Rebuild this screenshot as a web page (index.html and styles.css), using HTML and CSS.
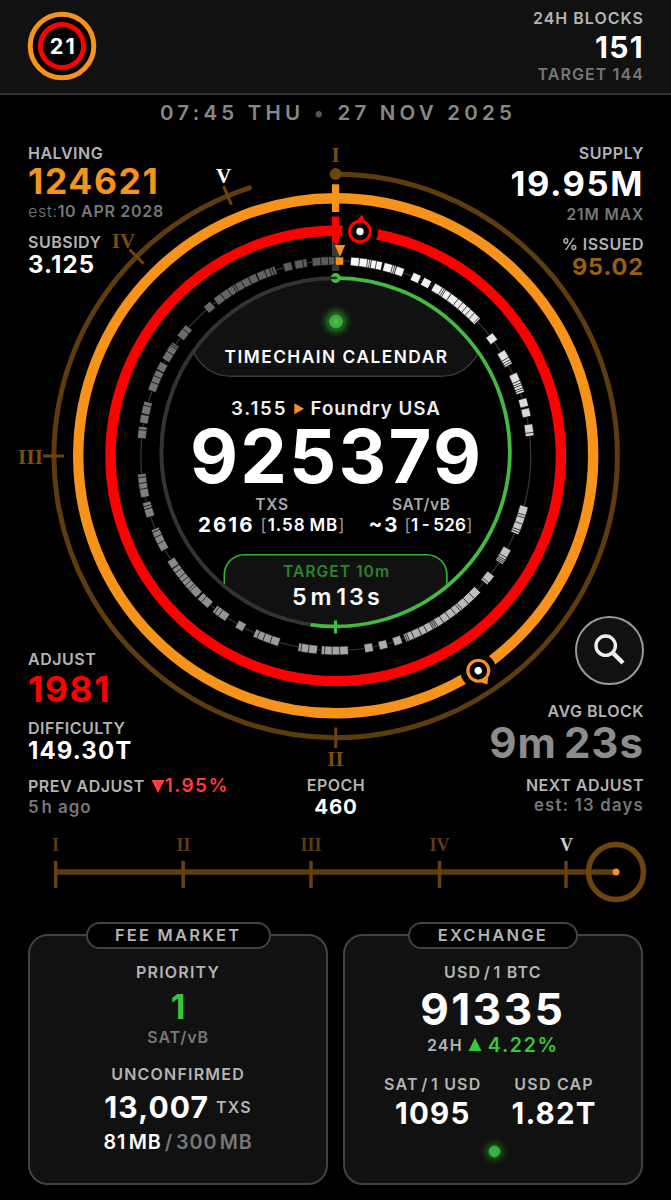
FILE: index.html
```html
<!DOCTYPE html>
<html lang="en">
<head>
    <meta charset="UTF-8">
    <meta name="viewport" content="width=device-width, initial-scale=1.0">
    <title>Timechain Calendar</title>
    <link rel="stylesheet" href="styles.css">
</head>
<body>

    <!-- Header -->
    <header class="header">
        <svg class="logo" width="70" height="70" viewBox="0 0 70 70">
            <circle cx="35" cy="35" r="31.8" fill="#000" stroke="#f7931a" stroke-width="5"/>
            <circle cx="35" cy="35" r="21.6" fill="#000" stroke="#f00" stroke-width="5"/>
            <text class="logo-text" x="22.8" y="42.8" textLength="25">21</text>
        </svg>
        <div class="col right">
            <div class="label blocks-label">24H BLOCKS</div>
            <div class="blocks">151</div>
            <div class="sub target">TARGET 144</div>
        </div>
    </header>

    <main>
        <div class="date">07:45 THU <span class="dot">•</span> 27 NOV 2025</div>

        <section class="clock">
            <svg class="dial" width="671" height="689" viewBox="0 136 671 689">
                <defs>
                    <clipPath id="inner"><circle cx="335.7" cy="452.2" r="175"/></clipPath>
                    <radialGradient id="led">
                        <stop offset="0" stop-color="#4cc44c"/>
                        <stop offset="1" stop-color="#2f9c33"/>
                    </radialGradient>
                    <radialGradient id="glow">
                        <stop offset="0.45" stop-color="#2fbf2f" stop-opacity="0.6"/>
                        <stop offset="0.7" stop-color="#2fbf2f" stop-opacity="0.2"/>
                        <stop offset="1" stop-color="#2fbf2f" stop-opacity="0"/>
                    </radialGradient>
                </defs>

                <!-- Epoch ring -->
                <path d="M335.7 174.3A281.7 281.7 0 0 1 335.7 737.7A281.7 281.7 0 0 1 249.5 187.8" fill="none" stroke="#5f3c0e" stroke-width="5" stroke-linecap="round"/>
                <circle cx="335.7" cy="174" r="6" fill="#6d430e"/>
                <g class="ring-ticks">
                    <path d="M223.6 186.2L231.4 204.6M129.5 249.5L143.7 263.7M43 456H64M335.7 727.5V748"/>
                </g>
                <g class="roman">
                    <text x="335.5" y="162">I</text>
                    <text x="335.5" y="766">II</text>
                    <text x="30.5" y="464" textLength="25">III</text>
                    <text x="123.5" y="248">IV</text>
                    <text class="on" x="223.5" y="182.5">V</text>
                </g>

                <!-- Halving and difficulty rings -->
                <circle cx="335.7" cy="455.7" r="257.5" fill="none" stroke="#f7931a" stroke-width="10.4"/>
                <circle cx="335.7" cy="455.9" r="225.2" fill="none" stroke="#f00" stroke-width="10.4"/>
                <circle cx="360" cy="231.5" r="18" fill="#000"/>
                <circle cx="478.3" cy="670.7" r="18" fill="#000"/>
                <rect x="332" y="184.3" width="7.2" height="27.7" fill="#f7931a"/>
                <path d="M332 216.5h7.2v9.3h2.4v10h-2.4v6l-2 4-5.2-5z" fill="#f00"/>
                <g transform="translate(360 231.5) rotate(6.1)">
                    <path d="M-4 -11L0 -17L4 -11z" fill="#f00"/>
                    <circle r="10.4" fill="#000" stroke="#f00" stroke-width="3.2"/>
                    <circle r="3.7" fill="#fff"/>
                </g>
                <g transform="translate(478.3 670.7) rotate(146.5)">
                    <path d="M-4.5 -11L0 -16.5L4.5 -11z" fill="#f7931a"/>
                    <circle r="10.4" fill="#000" stroke="#f7931a" stroke-width="3.2"/>
                    <circle r="3.7" fill="#fff"/>
                </g>

                <!-- Blocks of the last 24 hours -->
                <circle cx="335.8" cy="455.7" r="195" fill="none" stroke="#333" stroke-width="1.3"/>
                <path d="M332 240.5l7.2 6.5v24h-7.2z" fill="#3a3a3a"/>
                <g id="blocks"></g>
                <path d="M334.8 245h10.4l-5.2 12z" fill="#f7931a"/>
                <rect x="335.7" y="257.4" width="7.6" height="7.4" fill="#f7931a"/>

                <!-- Inner face -->
                <circle cx="335.7" cy="452.2" r="176" fill="#000"/>
                <g clip-path="url(#inner)">
                    <rect x="190.5" y="230" width="291" height="146.3" rx="40" fill="#111" stroke="#3a3a3a" stroke-width="1.4"/>
                    <rect x="224.3" y="554.7" width="222.6" height="120" rx="20" fill="#111"/>
                    <path d="M224.3 592V574.7a20 20 0 0 1 20-20H426.9a20 20 0 0 1 20 20V589" fill="none" stroke="#34b334" stroke-width="1.6"/>
                </g>
                <circle cx="335.7" cy="452.2" r="174.3" fill="none" stroke="#333" stroke-width="4"/>
                <circle cx="335.7" cy="278" r="5" fill="#3fc13f"/>
                <path d="M335.7 277.9A174.3 174.3 0 1 1 310.5 624.7" fill="none" stroke="#40bd3c" stroke-width="3.5"/>
                <path d="M330 278h6" stroke="#2b2b2b" stroke-width="2.6" stroke-linecap="round"/>
                <path d="M335.5 620.5V633.5" stroke="#3fc13f" stroke-width="3.2"/>

                <circle cx="336" cy="321.5" r="16" fill="url(#glow)"/>
                <circle cx="336" cy="321.5" r="7.8" fill="url(#led)" stroke="#14541a" stroke-width="1.2"/>

                <g class="face">
                    <text x="224.5" y="363.3" class="title" textLength="222.5">TIMECHAIN CALENDAR</text>
                    <text x="231" y="415" class="miner" textLength="54.5">3.155</text>
                    <path d="M294.3 403.3L304 408.7L294.3 414.2z" fill="#f7931a"/>
                    <text x="310.5" y="415" class="miner" textLength="129.5">Foundry USA</text>
                    <text x="190" y="483" class="height" textLength="291">925379</text>
                    <text x="255.2" y="510" class="face-label" textLength="33">TXS</text>
                    <text x="392" y="510" class="face-label" textLength="58">SAT/vB</text>
                    <text x="198" y="532.2" class="face-value" textLength="54.5">2616</text>
                    <text x="260.5" y="530.5" class="range" textLength="84"><tspan class="br">[</tspan>1.58&#8201;MB<tspan class="br">]</tspan></text>
                    <text x="368.5" y="532.2" class="face-value" textLength="29">~3</text>
                    <text x="404.5" y="530.5" class="range" textLength="68"><tspan class="br">[</tspan>1&#8201;-&#8201;526<tspan class="br">]</tspan></text>
                    <text x="283" y="577.3" class="face-target" textLength="106">TARGET 10m</text>
                    <text x="292" y="604.7" class="elapsed" textLength="39.5">5m</text>
                    <text x="336.2" y="604.7" class="elapsed" textLength="43.5">13s</text>
                </g>
            </svg>

            <div class="corners">
                <div class="row top">
                    <div class="col">
                        <div class="label">HALVING</div>
                        <div class="big orange">124621</div>
                        <div class="sub est"><span class="light">est:</span>10 APR 2028</div>
                        <div class="label second">SUBSIDY</div>
                        <div class="mid">3.125</div>
                    </div>
                    <div class="col right">
                        <div class="label">SUPPLY</div>
                        <div class="big supply">19.95M</div>
                        <div class="sub max">21M MAX</div>
                        <div class="label issued">% ISSUED</div>
                        <div class="mid brown">95.02</div>
                    </div>
                </div>

                <div class="row bottom">
                    <div class="col adjust">
                        <div class="label">ADJUST</div>
                        <div class="big red">1981</div>
                        <div class="label difficulty">DIFFICULTY</div>
                        <div class="mid">149.30T</div>
                        <div class="label prev">PREV ADJUST
                            <svg width="14" height="13" viewBox="0 0 14 13"><path d="M0.5 0H13.5L7 13z" fill="#ff3b3b"/></svg><span class="change">1.95%</span>
                        </div>
                        <div class="sub ago">5<span class="unit">h</span> ago</div>
                    </div>
                    <div class="col center">
                        <div class="label">EPOCH</div>
                        <div class="epoch">460</div>
                    </div>
                    <div class="col right average">
                        <button class="search" aria-label="Search">
                            <svg width="34" height="34" viewBox="0 0 34 34" fill="none" stroke="#eee">
                                <circle cx="12.7" cy="12.7" r="9.7" stroke-width="3.4"/>
                                <path d="M20.5 20.5L30 30" stroke-width="4.4"/>
                            </svg>
                        </button>
                        <div class="label avg-label">AVG BLOCK</div>
                        <div class="avg">9m<span class="thin"></span>23s</div>
                        <div class="label next">NEXT ADJUST</div>
                        <div class="sub days">est: 13 days</div>
                    </div>
                </div>
            </div>
        </section>

        <!-- Epoch timeline -->
        <svg class="timeline" width="671" height="90" viewBox="0 825 671 90">
            <path d="M54.5 872H616" stroke="#5f3c0e" stroke-width="5.5"/>
            <path d="M55.7 861V888M183.2 861V888M311 861V888M439.5 861V888M566 861V888" stroke="#6a400f" stroke-width="3.5"/>
            <circle cx="616" cy="872" r="27.5" fill="none" stroke="#6d430e" stroke-width="5.6"/>
            <circle cx="616" cy="872" r="3.5" fill="#f7931a"/>
            <g class="roman small">
                <text x="55.5" y="850.5">I</text>
                <text x="183.5" y="850.5">II</text>
                <text x="311" y="850.5">III</text>
                <text x="439.5" y="850.5">IV</text>
                <text class="soft" x="566.5" y="850.5">V</text>
            </g>
        </svg>

        <section class="cards">
            <div class="card">
                <div class="pill fee">FEE MARKET</div>
                <div class="label priority">PRIORITY</div>
                <div class="fee-value">1</div>
                <div class="sub satvb">SAT/vB</div>
                <div class="label unconfirmed">UNCONFIRMED</div>
                <div class="txs"><span class="txs-value">13,007</span><span class="label">TXS</span></div>
                <div class="mempool">81<i></i>MB<span class="dim"><b>/</b>300<i></i>MB</span></div>
            </div>
            <div class="card">
                <div class="pill exchange">EXCHANGE</div>
                <div class="label pair">USD<i></i>/<i></i>1 BTC</div>
                <div class="price">91335</div>
                <div class="day">
                    <span class="label">24H</span>
                    <svg width="14" height="13" viewBox="0 0 14 13"><path d="M7 0L13.5 13H0.5z" fill="#36c936"/></svg>
                    <span class="gain">4.22%</span>
                </div>
                <div class="pairs">
                    <div>
                        <div class="label">SAT<i></i>/<i></i>1 USD</div>
                        <div class="amount">1095</div>
                    </div>
                    <div>
                        <div class="label">USD CAP</div>
                        <div class="amount">1.82T</div>
                    </div>
                </div>
                <div class="led"></div>
            </div>
        </section>
    </main>

    <script>
        // clock angle of every block, newest first
        const angles = [
            5.6, 8, 8.6, 9.1, 10.6, 12.4, 15.4, 16, 16.5, 19,
            24.2, 27.6, 31.2, 31.8, 32.3, 34.2, 36.7, 38.4, 40, 41.4, 42.9, 44.8, 45.3,
            53.1, 59.1, 59.9, 60.6, 61.2, 66.5, 67.3, 67.9, 68.8, 69.4, 70.1, 74.3, 77.3, 82, 83,
            106.2, 107, 108.9, 110.8, 111.5, 112.2, 119.6, 120.4, 120.9, 121.4, 121.9, 128.5, 129.2,
            134.6, 136.9, 139.3, 140, 141.7, 143.8, 145.9, 147.9, 148.4, 148.9, 149.4, 151.4, 153.2, 155.5, 157, 157.6, 158.1,
            161.6, 166, 170.3, 177.6, 179.8, 182, 183,
            186.7, 188.9, 189.8, 198.1, 200.3, 202.1, 203.4, 209.2,
            215, 216.3, 217.1, 221.3, 222.8, 225.8, 226.6, 228, 229.4, 230.8, 232.6, 234, 236.6,
            242.4, 244.4, 246, 246.8, 253, 253.9, 255, 259, 260.7, 262.4, 263.4,
            276.3, 277.3, 280.8, 283.5, 284.7, 290.6, 292.5, 294.3, 297,
            300.5, 302.4, 303, 303.6, 308.4, 309.9, 319.6,
            323.3, 325.7, 327.5, 328.2, 330.3, 332.6, 335, 337.7, 339.2, 340, 340.9,
            345.8, 349.1, 350.3, 354.3, 356.6, 358.5
        ];
        const group = document.getElementById("blocks");

        angles.slice().reverse().forEach(angle => {
            const shade = Math.round(angle < 250 ? 255 - angle * 0.5 : 130 - (angle - 250) * 0.38);
            const block = document.createElementNS("http://www.w3.org/2000/svg", "rect");
            block.setAttribute("x", 331.5);
            block.setAttribute("y", 256.5);
            block.setAttribute("width", 8.6);
            block.setAttribute("height", 8.6);
            block.setAttribute("fill", `rgb(${shade}, ${shade}, ${shade})`);
            block.setAttribute("stroke", "#000");
            block.setAttribute("stroke-width", 0.65);
            block.setAttribute("transform", `rotate(${angle} 335.8 455.7)`);
            group.appendChild(block);
        });
    </script>

</body>
</html>
```

FILE: styles.css
```css
/* Page */
body {
    margin: 0;
    background-color: #000;
    color: #fff;
    font-family: "Inter", "Liberation Sans", sans-serif;
    font-weight: 600;
}

main {
    display: flex;
    flex-direction: column;
}

svg {
    display: block;
    flex: none;
}

i {
    display: inline-block;
    width: 2.5px;
}

.header {
    display: flex;
    justify-content: space-between;
    height: 93px;
    padding: 0 27px;
    background-color: #111;
    border-bottom: 2px solid #333;
}

.logo {
    margin-top: 11px;
}

.logo-text {
    font-size: 21.5px;
    font-weight: 700;
    fill: #fff;
}

.date {
    height: 41px;
    padding-left: 5px;
    line-height: 36px;
    font-size: 20.5px;
    letter-spacing: 4.2px;
    color: #888;
    text-align: center;
}

.dot {
    color: #555;
}

/* Text blocks */
.col {
    display: flex;
    flex-direction: column;
    white-space: nowrap;
}

.right {
    align-items: flex-end;
    text-align: right;
}

.label {
    line-height: 20px;
    font-size: 16px;
    letter-spacing: 0.5px;
    color: #b4b4b4;
}

.sub {
    line-height: 20px;
    font-size: 16px;
    letter-spacing: 0.9px;
    color: #777;
}

.light {
    font-weight: 300;
}

.big {
    line-height: 38.6px;
    font-size: 35.5px;
    font-weight: 700;
    letter-spacing: 1.6px;
}

.mid {
    line-height: 26px;
    font-size: 24px;
    font-weight: 700;
    letter-spacing: 1.1px;
}

.orange { color: #f7931a; }
.red { color: #f00; }
.brown { color: #965f14; }

.mid.brown {
    font-size: 23.5px;
    letter-spacing: 0.9px;
}

.blocks-label {
    margin-top: 7.5px;
    letter-spacing: 1px;
}

.blocks {
    line-height: 39px;
    font-size: 30px;
    font-weight: 700;
    letter-spacing: 1.3px;
}

.target {
    line-height: 14px;
    letter-spacing: 1.1px;
}

/* Clock */
.clock {
    display: grid;
    height: 689px;
}

.dial,
.corners {
    grid-area: 1 / 1;
}

.corners {
    display: flex;
    flex-direction: column;
    justify-content: space-between;
    height: 683px;
    padding: 6.7px 27px 0 28px;
    box-sizing: border-box;
}

.row {
    display: grid;
    grid-template-columns: 1fr 1fr;
    align-items: end;
}

.row.top {
    align-items: start;
}

.row.bottom {
    grid-template-columns: 1fr auto 1fr;
}

.est {
    line-height: 21px;
    letter-spacing: 0.7px;
}

.second {
    margin-top: 9.5px;
}

.supply {
    font-size: 34.5px;
    line-height: 42px;
}

.max {
    font-size: 15.5px;
}

.issued {
    margin-top: 9px;
}

.adjust .difficulty {
    margin-top: 7px;
}

.adjust .big {
    line-height: 42px;
}

.prev {
    display: flex;
    align-items: center;
    gap: 6px;
    margin-top: 12.5px;
}

.change {
    margin-left: -6px;
    font-size: 19px;
    letter-spacing: 1.4px;
    color: #ff3b3b;
}

.ago {
    line-height: 23px;
    font-size: 17px;
}

.unit {
    margin-left: 2px;
}

.center {
    align-items: center;
}

.epoch {
    line-height: 24px;
    font-size: 20.5px;
    font-weight: 700;
    letter-spacing: 0.9px;
}

.average {
    padding-bottom: 4.5px;
}

.search {
    display: flex;
    align-items: center;
    justify-content: center;
    width: 69px;
    height: 69px;
    margin-bottom: 16px;
    padding: 0;
    border: 2px solid #999;
    border-radius: 50%;
    background-color: #111;
}

.avg {
    line-height: 43px;
    font-size: 42px;
    font-weight: 700;
    letter-spacing: 1px;
    color: #8c8c8c;
}

.thin {
    display: inline-block;
    width: 7px;
}

.next {
    margin-top: 11px;
}

.days {
    font-size: 16.7px;
    letter-spacing: 1.25px;
}

.roman text {
    font-family: "Liberation Serif", serif;
    font-size: 21px;
    font-weight: 700;
    text-anchor: middle;
    fill: #7d4c12;
}

.roman.small text {
    font-size: 18px;
    fill: #5f3c0e;
}

.roman .on { fill: #fff; }
.roman.small .soft { fill: #ccc; }

.ring-ticks path {
    stroke: #6d430e;
    stroke-width: 3;
}

/* Face */
.face text { fill: #fff; }
.face .title { font-size: 17.3px; }
.face .miner { font-size: 18.8px; fill: #eee; }
.face .height { font-size: 74px; font-weight: 700; }
.face .face-label { font-size: 15.5px; fill: #aaa; }
.face .face-value { font-size: 20.5px; font-weight: 700; }
.face .range { font-size: 17px; }
.face .br { font-weight: 400; fill: #999; }
.face .face-target { font-size: 15.7px; fill: #278527; }
.face .elapsed { font-size: 23.3px; }

/* Cards */
.cards {
    display: grid;
    grid-template-columns: 1fr 1fr;
    gap: 14.5px;
    margin-top: 19px;
    padding: 0 28px;
}

.card {
    display: flex;
    flex-direction: column;
    align-items: center;
    height: 251px;
    box-sizing: border-box;
    border: 2px solid #424242;
    border-radius: 20px;
    background-color: #111;
    white-space: nowrap;
}

.card .label {
    letter-spacing: 1.2px;
}

.pill {
    height: 27px;
    margin-top: -14px;
    box-sizing: border-box;
    border: 2px solid #424242;
    border-radius: 14px;
    background-color: #000;
    line-height: 23px;
    font-size: 16.5px;
    letter-spacing: 2.2px;
    text-align: center;
    color: #b4b4b4;
}

.fee { width: 185px; }
.exchange { width: 170px; }

.priority,
.pair {
    margin-top: 12.5px;
}

.fee-value {
    line-height: 50px;
    font-size: 34px;
    font-weight: 700;
    color: #3ac43a;
}

.satvb {
    line-height: 10px;
}

.unconfirmed {
    margin-top: 22.5px;
}

.txs {
    display: flex;
    align-items: center;
    gap: 7px;
    height: 46px;
}

.txs-value {
    font-size: 30px;
    font-weight: 700;
    letter-spacing: 1.1px;
}

.mempool {
    line-height: 24px;
    font-size: 19.7px;
    letter-spacing: 0.9px;
}

.dim {
    color: #777;
}

.dim b {
    margin: 0 3px;
    font-weight: 600;
}

.price {
    line-height: 54px;
    font-size: 44px;
    font-weight: 700;
    letter-spacing: 2.6px;
}

.day {
    display: flex;
    align-items: center;
    gap: 5.5px;
    height: 18px;
}

.day .gain {
    font-size: 19.5px;
    letter-spacing: 1.7px;
    color: #36c936;
}

.pairs {
    display: flex;
    gap: 30px;
    margin: 20px 5px 0 0;
    text-align: center;
}

.amount {
    line-height: 39px;
    font-size: 29.5px;
    font-weight: 700;
    letter-spacing: 1.2px;
}

.led {
    width: 13px;
    height: 13px;
    margin-top: 12px;
    margin-left: 4px;
    box-sizing: border-box;
    border: 1px solid #14641a;
    border-radius: 50%;
    background-color: #3fae41;
    box-shadow: 0 0 9px #2cae2c;
}
```
